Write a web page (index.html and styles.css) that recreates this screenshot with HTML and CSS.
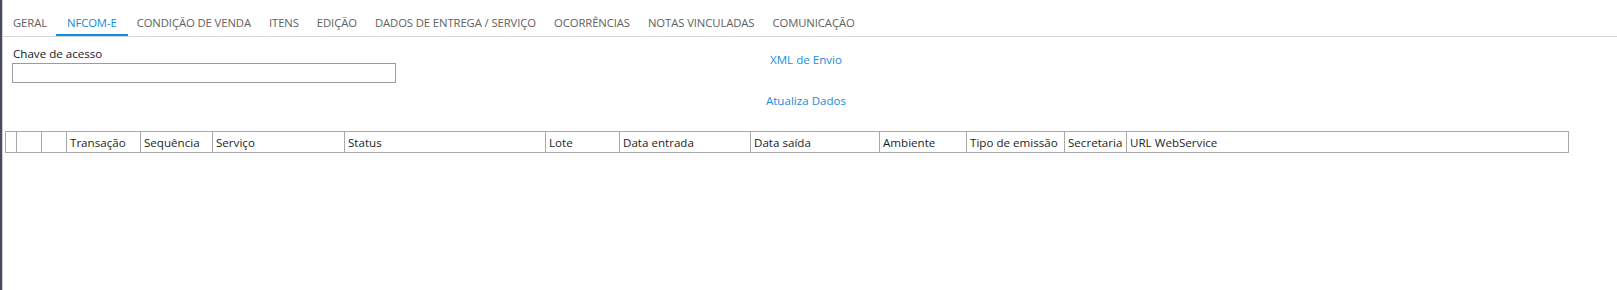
FILE: index.html
```html
<!DOCTYPE html>
<html lang="pt-BR">
<head>
  <meta charset="UTF-8" />
  <title>NFCom-e</title>
  <link rel="stylesheet" href="styles.css">
</head>
<body>
  <div class="frame">
    <ul class="tabs">
      <li>GERAL</li>
      <li class="active">NFCOM-E</li>
      <li>CONDIÇÃO DE VENDA</li>
      <li>ITENS</li>
      <li>EDIÇÃO</li>
      <li>DADOS DE ENTREGA / SERVIÇO</li>
      <li>OCORRÊNCIAS</li>
      <li>NOTAS VINCULADAS</li>
      <li>COMUNICAÇÃO</li>
    </ul>

    <div class="panel">
      <div class="form-row">
        <div class="field">
          <label for="chave">Chave de acesso</label>
          <input type="text" id="chave">
        </div>
        <div class="links">
          <a href="#">XML de Envio</a>
          <a href="#">Atualiza Dados</a>
        </div>
      </div>

      <table class="grid">
        <thead>
          <tr>
            <th class="c0"></th>
            <th class="c1"></th>
            <th class="c2"></th>
            <th class="c3">Transação</th>
            <th class="c4">Sequência</th>
            <th class="c5">Serviço</th>
            <th class="c6">Status</th>
            <th class="c7">Lote</th>
            <th class="c8">Data entrada</th>
            <th class="c9">Data saída</th>
            <th class="c10">Ambiente</th>
            <th class="c11">Tipo de emissão</th>
            <th class="c12">Secretaria</th>
            <th class="c13">URL WebService</th>
          </tr>
        </thead>
        <tbody></tbody>
      </table>
    </div>
  </div>
</body>
</html>
```

FILE: styles.css
```css
* {
  box-sizing: border-box;
}

html, body {
  margin: 0;
  height: 100%;
  background: #ffffff;
}

body {
  font-family: "Open Sans", "Noto Sans", sans-serif;
  font-size: 12px;
  color: #1e1e1e;
  overflow: hidden;
}

.frame {
  height: 100%;
  border-left: 2px solid #474c58;
  background: #ffffff;
}

.tabs {
  list-style: none;
  margin: 0;
  padding: 0 0 0 1px;
  display: flex;
  height: 37px;
  border-bottom: 1px solid #d6d6d6;
  border-left: 1px solid #d0d0d0;
}

.tabs li {
  padding: 15px 9px 0;
  font-size: 11.3px;
  color: #616161;
  height: 36px;
  letter-spacing: -0.1px;
}

.tabs li.active {
  color: #1289e4;
  border-bottom: 2px solid #0d8ce9;
  padding: 15px 11px 0;
}

.panel {
  height: calc(100% - 37px);
  border-left: 1px solid #d0d0d0;
  padding: 9px 0 0 2px;
}

.form-row {
  display: flex;
  height: 85px;
}

.field {
  width: 385px;
  margin-left: 7px;
}

.field label {
  display: block;
  font-size: 11.6px;
  line-height: 16px;
  color: #1a1a1a;
  margin-bottom: 1px;
  padding-left: 1px;
}

.field input {
  display: block;
  width: 384px;
  height: 20px;
  border: 1px solid #9c9c9c;
  margin: 0;
  padding: 0 3px;
}

.links {
  width: 818px;
  display: flex;
  flex-direction: column;
  align-items: center;
  padding-top: 5px;
  gap: 24px;
}

.links a {
  color: #1a8ce0;
  text-decoration: none;
  font-size: 11.6px;
  line-height: 17px;
}

.grid {
  border-collapse: collapse;
  table-layout: fixed;
  width: 1563px;
  margin-left: 0;
}

.grid th {
  border: 1px solid #a8a8a8;
  height: 21px;
  padding: 0 0 0 3px;
  font-weight: normal;
  text-align: left;
  font-size: 11.6px;
  color: #1e1e1e;
  white-space: nowrap;
  overflow: hidden;
}

.c0 { width: 11px; }
.c1 { width: 25px; }
.c2 { width: 25px; }
.c3 { width: 74px; }
.c4 { width: 72px; }
.c5 { width: 132px; }
.c6 { width: 201px; }
.c7 { width: 74px; }
.c8 { width: 131px; }
.c9 { width: 129px; }
.c10 { width: 87px; }
.c11 { width: 98px; }
.c12 { width: 62px; }
.c13 { width: 442px; }
```
